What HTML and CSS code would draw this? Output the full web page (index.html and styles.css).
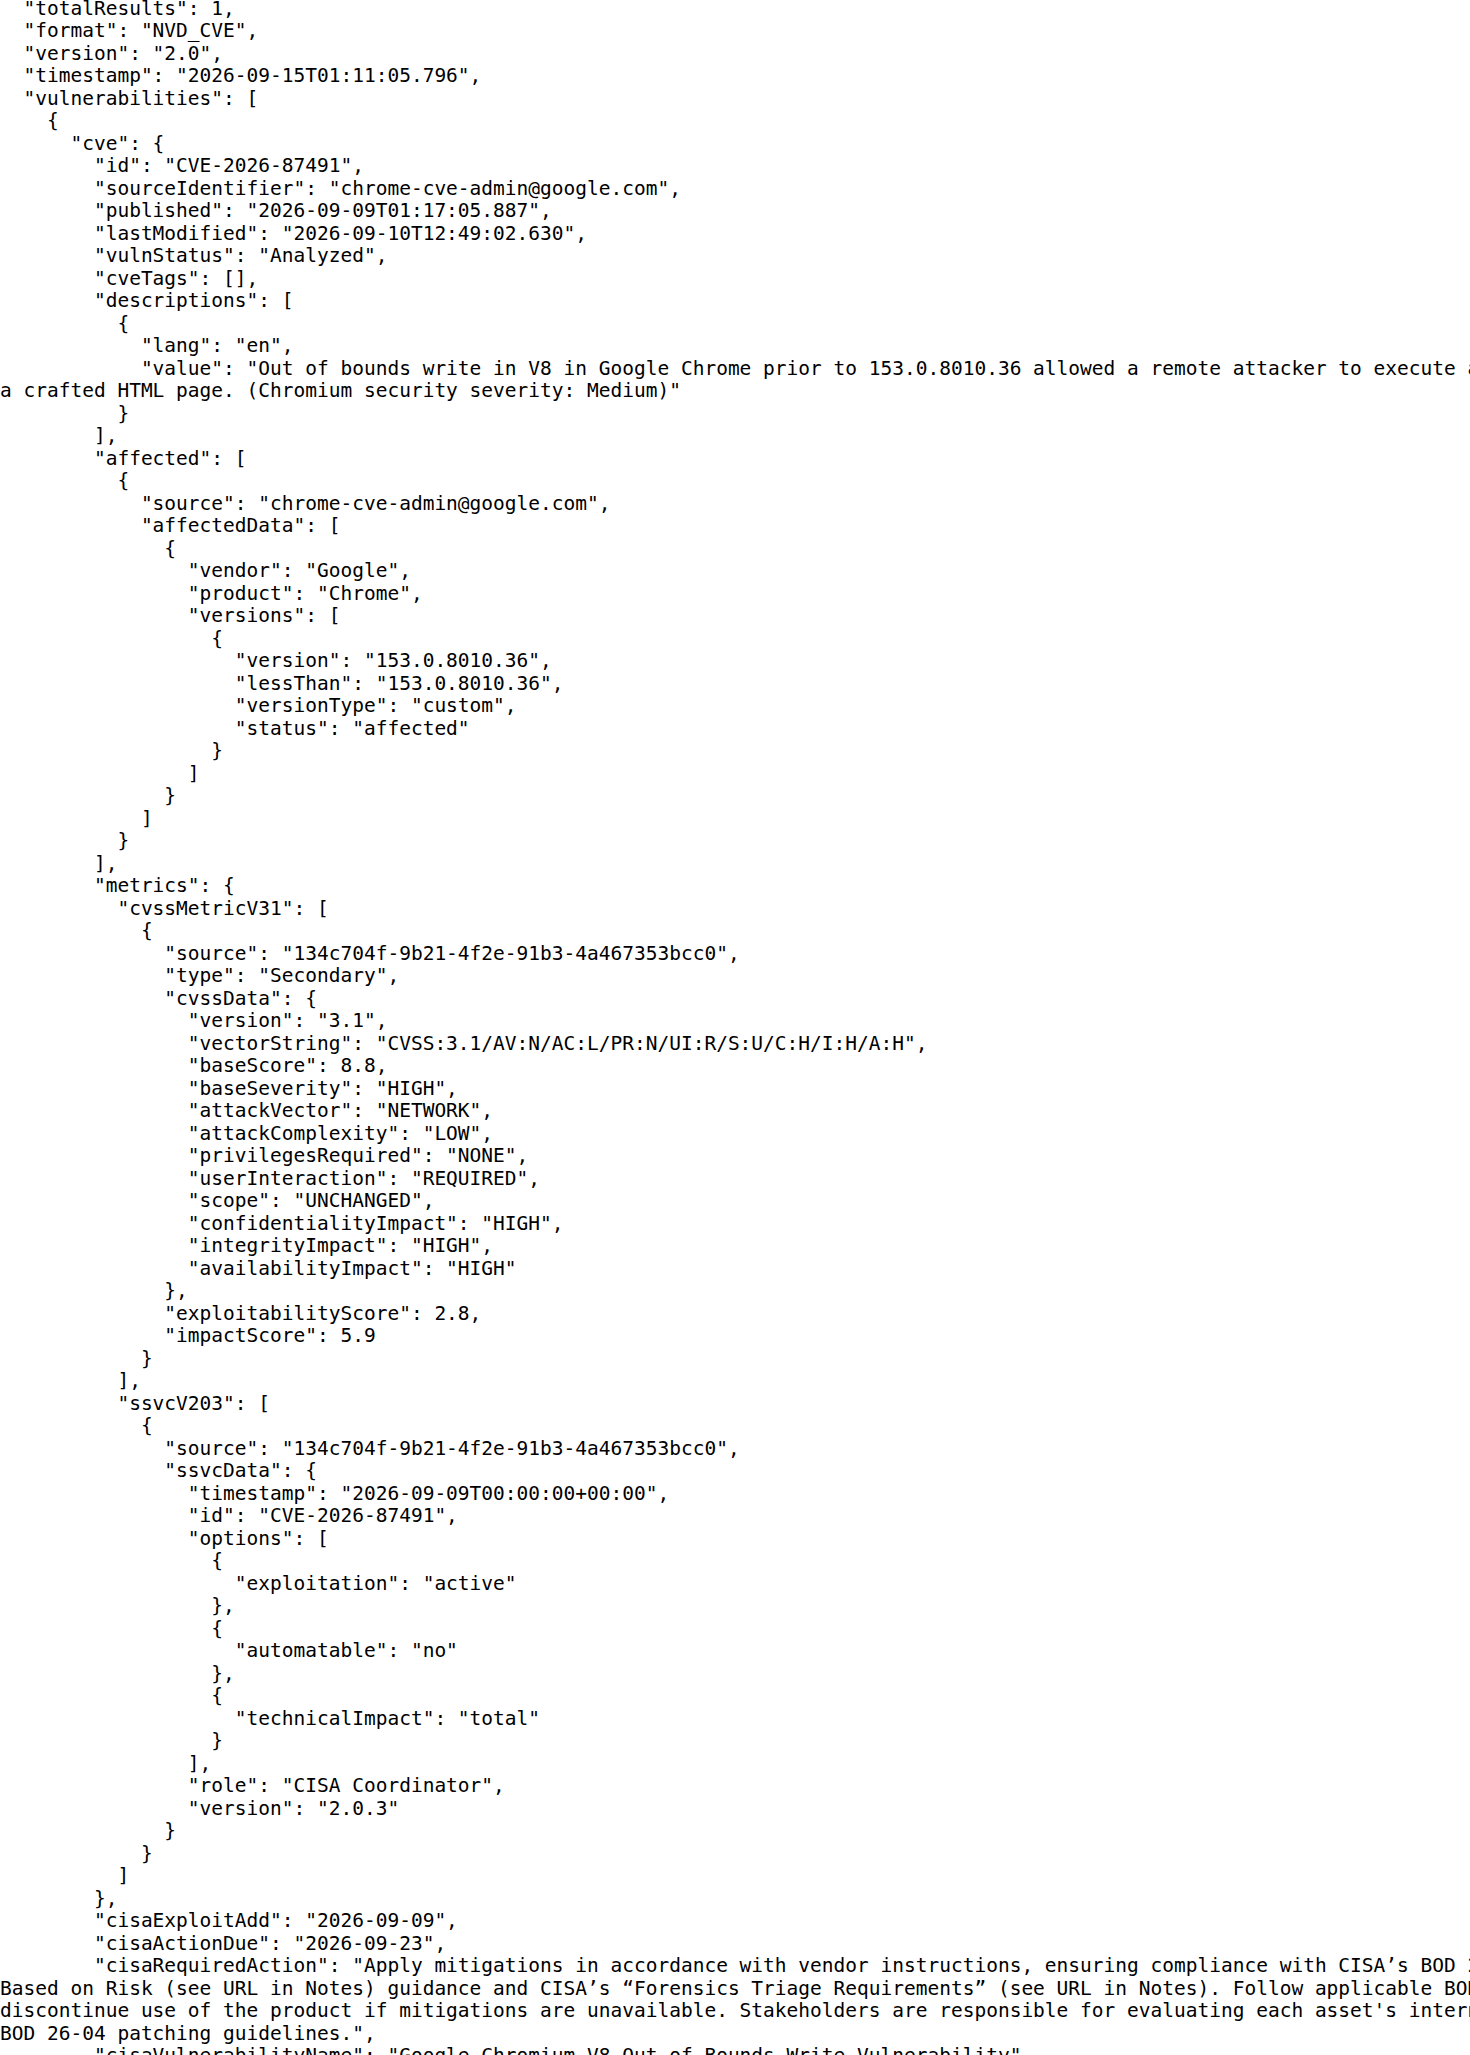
FILE: index.html
```html
<!DOCTYPE html>
<html lang="en">
<head>
<meta charset="utf-8">
<title>CVE-2026-87491</title>
<link rel="stylesheet" href="styles.css">
</head>
<body>
<pre class="json">  "totalResults": 1,
  "format": "NVD_CVE",
  "version": "2.0",
  "timestamp": "2026-09-15T01:11:05.796",
  "vulnerabilities": [
    {
      "cve": {
        "id": "CVE-2026-87491",
        "sourceIdentifier": "chrome-cve-admin@google.com",
        "published": "2026-09-09T01:17:05.887",
        "lastModified": "2026-09-10T12:49:02.630",
        "vulnStatus": "Analyzed",
        "cveTags": [],
        "descriptions": [
          {
            "lang": "en",
            "value": "Out of bounds write in V8 in Google Chrome prior to 153.0.8010.36 allowed a remote attacker to execute arbitrary code inside a sandbox via
a crafted HTML page. (Chromium security severity: Medium)"
          }
        ],
        "affected": [
          {
            "source": "chrome-cve-admin@google.com",
            "affectedData": [
              {
                "vendor": "Google",
                "product": "Chrome",
                "versions": [
                  {
                    "version": "153.0.8010.36",
                    "lessThan": "153.0.8010.36",
                    "versionType": "custom",
                    "status": "affected"
                  }
                ]
              }
            ]
          }
        ],
        "metrics": {
          "cvssMetricV31": [
            {
              "source": "134c704f-9b21-4f2e-91b3-4a467353bcc0",
              "type": "Secondary",
              "cvssData": {
                "version": "3.1",
                "vectorString": "CVSS:3.1/AV:N/AC:L/PR:N/UI:R/S:U/C:H/I:H/A:H",
                "baseScore": 8.8,
                "baseSeverity": "HIGH",
                "attackVector": "NETWORK",
                "attackComplexity": "LOW",
                "privilegesRequired": "NONE",
                "userInteraction": "REQUIRED",
                "scope": "UNCHANGED",
                "confidentialityImpact": "HIGH",
                "integrityImpact": "HIGH",
                "availabilityImpact": "HIGH"
              },
              "exploitabilityScore": 2.8,
              "impactScore": 5.9
            }
          ],
          "ssvcV203": [
            {
              "source": "134c704f-9b21-4f2e-91b3-4a467353bcc0",
              "ssvcData": {
                "timestamp": "2026-09-09T00:00:00+00:00",
                "id": "CVE-2026-87491",
                "options": [
                  {
                    "exploitation": "active"
                  },
                  {
                    "automatable": "no"
                  },
                  {
                    "technicalImpact": "total"
                  }
                ],
                "role": "CISA Coordinator",
                "version": "2.0.3"
              }
            }
          ]
        },
        "cisaExploitAdd": "2026-09-09",
        "cisaActionDue": "2026-09-23",
        "cisaRequiredAction": "Apply mitigations in accordance with vendor instructions, ensuring compliance with CISA’s BOD 22-01 and Prioritizing Remediation
Based on Risk (see URL in Notes) guidance and CISA’s “Forensics Triage Requirements” (see URL in Notes). Follow applicable BOD guidance for cloud services or
discontinue use of the product if mitigations are unavailable. Stakeholders are responsible for evaluating each asset's internet exposure according to
BOD 26-04 patching guidelines.",
        "cisaVulnerabilityName": "Google Chromium V8 Out-of-Bounds Write Vulnerability",
        "cwes": [
          "CWE-787"
        ]
      }
    }
  ]
</pre>
</body>
</html>
```

FILE: styles.css
```css
html,
body {
  margin: 0;
  padding: 0;
  background: #ffffff;
  overflow: hidden;
}

.json {
  margin: -2.3px 0 0 0;
  padding: 0;
  font-family: "DejaVu Sans Mono", monospace;
  font-size: 19.5px;
  line-height: 22.5px;
  color: #000000;
  white-space: pre;
}
```
